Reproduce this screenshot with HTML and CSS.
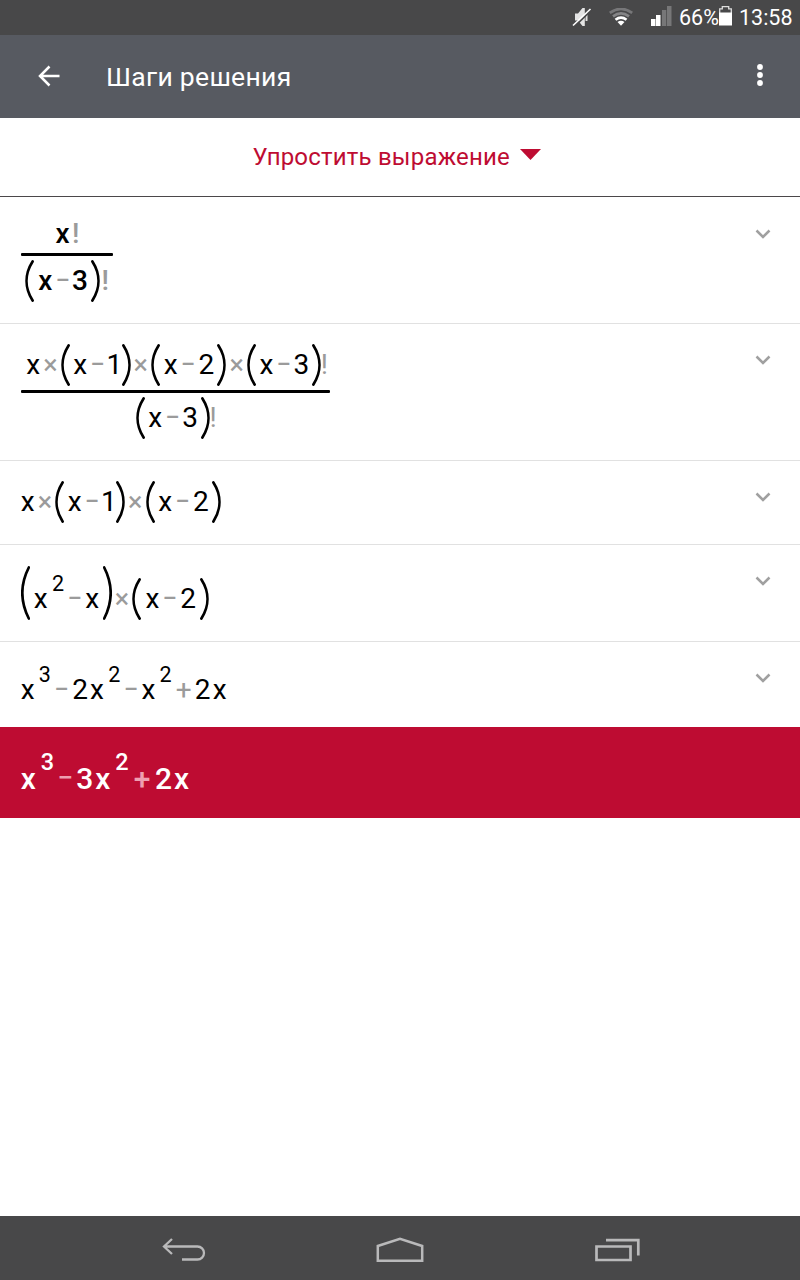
FILE: index.html
```html
<!DOCTYPE html>
<html lang="ru">
<head>
<meta charset="utf-8">
<title>Шаги решения</title>
<link rel="stylesheet" href="styles.css">
</head>
<body>
<svg class="defs" aria-hidden="true">
  <symbol id="open" viewBox="0 0 9 42"><path d="M7.6 1.5C-.4 14-.4 28 7.6 40.5"/></symbol>
  <symbol id="close" viewBox="0 0 9 42"><path d="M1.4 1.5C9.4 14 9.4 28 1.4 40.5"/></symbol>
  <symbol id="open-tall" viewBox="0 0 9 54"><path d="M7.8 1.5C-.6 18-.6 36 7.8 52.5"/></symbol>
  <symbol id="close-tall" viewBox="0 0 9 54"><path d="M1.2 1.5C9.6 18 9.6 36 1.2 52.5"/></symbol>
  <symbol id="chevron" viewBox="0 0 16 10"><path d="M1.5 1.5L8 8l6.500-6.500"/></symbol>
</svg>
<div class="screen">
  <div class="status">
    <svg class="mute" width="20" height="20" viewBox="0 0 20 20"><path d="M3 6.500h3L10.500 1h2.300v18h-2.300L6 13.500H3z" fill="#e4e4e4"/><path d="M14.500 6v8" stroke="#ddd" stroke-width="2"/><path d="M2.500 19.500L19.500 3" stroke="#484849" stroke-width="1.800"/><path d="M1 18.500L18.500 2" stroke="#fff" stroke-width="1.600"/></svg>
    <svg class="wifi" width="24" height="18" viewBox="0 0 24 18"><g fill="none" stroke-width="2.700"><path d="M.8 4.800Q12-3 23.200 4.800" stroke="#777779"/><path d="M4 8.400Q12 2.500 20 8.400" stroke="#858587"/><path d="M6.500 11.700Q12 7.500 17.500 11.700" stroke="#fff"/></g><path d="M8.500 14Q12 11.500 15.500 14L12 17.800z" fill="#fff"/></svg>
    <svg class="signal" width="21" height="21" viewBox="0 0 21 21"><path d="M0 13h4.500v7H0zM5 9h4.500v11H5z" fill="#fff"/><path d="M11 4h4.300v16H11zM16 0h4.500v20H16z" fill="#777778"/></svg>
    <span class="percent">66%</span>
    <svg class="battery" width="13" height="20" viewBox="0 0 13 20"><path d="M.7 7V2.800h2.600V.7h6.400v2.100h2.600V7" fill="none" stroke="#ddd" stroke-width="1.300"/><path d="M0 6.500h13V19.500H0z" fill="#fff"/></svg>
    <span class="clock">13:58</span>
  </div>
  <header class="appbar">
    <svg class="back" width="22" height="22" viewBox="0 0 22 22"><path d="M11.500 1.500L2 11l9.500 9.500M2 11h19.500" fill="none" stroke="#fff" stroke-width="2.500"/></svg>
    <h1 class="title">Шаги решения</h1>
    <svg class="more" width="6" height="24" viewBox="0 0 6 24"><g fill="#fff"><circle cx="3" cy="4" r="2.900"/><circle cx="3" cy="12" r="2.900"/><circle cx="3" cy="20" r="2.900"/></g></svg>
  </header>
  <div class="method">
    <span class="method-name">Упростить выражение</span>
    <svg width="21" height="11" viewBox="0 0 21 11"><path d="M0 0h21L10.500 11z" fill="#be0c32"/></svg>
  </div>
  <main class="steps">
    <section class="step step-first">
      <div class="fraction">
        <div class="expr numerator"><span class="var">x</span><span class="fact">!</span></div>
        <div class="expr denominator"><svg class="paren open"><use href="#open"/></svg><span class="var">x</span><span class="minus">−</span><span class="num three">3</span><svg class="paren close"><use href="#close"/></svg><span class="fact">!</span></div>
      </div>
      <svg class="chevron"><use href="#chevron"/></svg>
    </section>
    <section class="step step-expanded">
      <div class="fraction">
        <div class="expr numerator"><span class="var">x</span><span class="times">×</span><svg class="paren open"><use href="#open"/></svg><span class="var">x</span><span class="minus">−</span><span class="num one">1</span><svg class="paren close"><use href="#close"/></svg><span class="times">×</span><svg class="paren open"><use href="#open"/></svg><span class="var">x</span><span class="minus">−</span><span class="num two">2</span><svg class="paren close"><use href="#close"/></svg><span class="times">×</span><svg class="paren open"><use href="#open"/></svg><span class="var">x</span><span class="minus">−</span><span class="num three">3</span><svg class="paren close"><use href="#close"/></svg><span class="fact">!</span></div>
        <div class="expr denominator"><svg class="paren open"><use href="#open"/></svg><span class="var">x</span><span class="minus">−</span><span class="num three">3</span><svg class="paren close"><use href="#close"/></svg><span class="fact">!</span></div>
      </div>
      <svg class="chevron"><use href="#chevron"/></svg>
    </section>
    <section class="step step-reduced">
      <div class="expr"><span class="var">x</span><span class="times">×</span><svg class="paren open"><use href="#open"/></svg><span class="var">x</span><span class="minus">−</span><span class="num one">1</span><svg class="paren close"><use href="#close"/></svg><span class="times">×</span><svg class="paren open"><use href="#open"/></svg><span class="var">x</span><span class="minus">−</span><span class="num two">2</span><svg class="paren close"><use href="#close"/></svg></div>
      <svg class="chevron"><use href="#chevron"/></svg>
    </section>
    <section class="step step-product">
      <div class="expr"><svg class="paren tall open"><use href="#open-tall"/></svg><span class="var">x</span><span class="sup">2</span><span class="minus">−</span><span class="var">x</span><svg class="paren tall close"><use href="#close-tall"/></svg><span class="times">×</span><svg class="paren open"><use href="#open"/></svg><span class="var">x</span><span class="minus">−</span><span class="num two">2</span><svg class="paren close"><use href="#close"/></svg></div>
      <svg class="chevron"><use href="#chevron"/></svg>
    </section>
    <section class="step step-sum">
      <div class="expr"><span class="var">x</span><span class="sup">3</span><span class="minus">−</span><span class="num">2</span><span class="var">x</span><span class="sup">2</span><span class="minus">−</span><span class="var">x</span><span class="sup">2</span><span class="plus">+</span><span class="num">2</span><span class="var">x</span></div>
      <svg class="chevron"><use href="#chevron"/></svg>
    </section>
    <section class="step result">
      <div class="expr"><span class="var">x</span><span class="sup">3</span><span class="minus">−</span><span class="num">3</span><span class="var">x</span><span class="sup">2</span><span class="plus">+</span><span class="num">2</span><span class="var">x</span></div>
    </section>
  </main>
  <nav class="navbar">
    <svg width="44" height="24" viewBox="0 0 44 24"><path d="M10 1L2 8.500l8 7.500M2 8.500h33.500a6.500 6.500 0 0 1 0 13H20" fill="none" stroke="#b9b9ba" stroke-width="2.300"/></svg>
    <svg class="home" width="48" height="26" viewBox="0 0 48 26"><path d="M1.800 23.800V9L24 1.700 46.200 9v14.800z" fill="none" stroke="#b9b9ba" stroke-width="2.500"/></svg>
    <svg width="45" height="24" viewBox="0 0 45 24"><path d="M1.500 8.500h34v13.500h-34zM11 2.200h32.300v15.300" fill="none" stroke="#b9b9ba" stroke-width="2.700"/></svg>
  </nav>
</div>
</body>
</html>
```
FILE: styles.css
```css
* { box-sizing: border-box; }
body { margin: 0; background: #fff; font-family: Roboto, "Noto Sans", sans-serif; }
.defs { display: block; width: 0; height: 0; position: absolute; }
.screen { width: 800px; height: 1280px; display: flex; flex-direction: column; overflow: hidden; }

.status { height: 35px; background: #484849; color: #fff; display: flex; align-items: flex-start; padding: 6px 9px 0 0; justify-content: flex-end; font-size: 21.500px; line-height: 24px; white-space: nowrap; }
.mute { margin: 1px 17px 0 0; }
.wifi { margin: 2px 18px 0 0; }
.signal { margin-right: 7px; }
.percent { width: 40px; }
.battery { margin-right: 7px; }
.clock { width: 52px; }

.appbar { height: 83px; background: #575a61; display: flex; align-items: center; padding: 0 37px 2px 38px; }
.title { margin: 0 auto 0 46px; color: #fff; font-size: 26.500px; font-weight: 400; line-height: 32px; letter-spacing: .3px; padding-top: 3px; }
.more { margin-bottom: 2px; }

.method { height: 79px; border-bottom: 1px solid #4b484a; display: flex; align-items: center; justify-content: center; gap: 10.500px; color: #be0c32; padding: 0 6px 1px 0; }
.method svg { margin-bottom: 4px; }
.method-name { font-size: 24px; line-height: 30px; letter-spacing: .2px; padding-top: 1px; }

.steps { flex: 1; }
.step { display: flex; justify-content: space-between; align-items: flex-start; padding: 20px 29px 0 20.700px; border-bottom: 1px solid #e1e1e1; font-size: 28px; color: #000; }
.step-first { height: 127px; padding-top: 16px; font-weight: 500; }
.step-expanded { height: 137px; }
.step-reduced { height: 84px; }
.step-product { height: 97px; padding-top: 21px; }
.step-sum { height: 85px; padding-top: 27px; border-bottom: 0; }
.result { height: 91px; padding-top: 29px; border-bottom: 0; background: #be0c32; color: #fff; font-size: 30px; font-weight: 500; }

.fraction { display: flex; flex-direction: column; align-items: center; }
.fraction::before { content: ""; order: 1; align-self: stretch; height: 3px; background: #000; border-radius: 1px; }
.numerator { order: 0; }
.denominator { order: 2; padding-top: 4px; }
.step-first .fraction { width: 92px; }
.step-first .numerator { margin-bottom: -2px; padding-left: 1px; }
.step-expanded .fraction { width: 309px; margin-left: .8px; }
.step-expanded .numerator { margin-bottom: 4px; padding-left: 1.500px; }

.expr { display: flex; align-items: flex-end; line-height: 42px; }
.expr > span { display: flex; justify-content: center; white-space: nowrap; }
.paren { display: block; width: 9px; height: 42px; fill: none; stroke: currentColor; stroke-width: 2.700px; stroke-linecap: round; }
.paren.tall { height: 54px; }
.open { margin-right: 3.400px; }
.close { margin-left: 3px; }
.step-first .open { margin-right: 4.200px; }
.step-product .open { margin-right: 4.100px; }
.step-product .close { margin-left: 3.500px; }
.var { width: 14px; }
.num { width: 16px; margin-right: 2px; }
.num.one { width: 12px; margin: 0 -1.800px 0 .3px; }
.num.two { margin-right: 0; }
.num.three { margin: 0 -.5px 0 -1px; }
.times, .minus, .plus, .fact { color: #9b9b9b; }
.times { width: 12px; margin: 0 4.500px 0 4.200px; font-size: 27px; }
.expr > .minus { width: 12px; margin: 0 4.400px; font-size: 26px; font-weight: 500; line-height: 40px; padding-bottom: 2px; }
.plus { width: 14px; margin: 0 4px 0 5px; }
.fact { width: 6px; margin-left: .5px; }
.numerator .var + .fact { margin-left: 3.200px; }
.step-first .denominator .fact { margin-left: 2.700px; }
.sup { width: 12px; margin: 0 0 30px 4.200px; font-size: 21.500px; line-height: 12px; }
.result .var { width: 15px; }
.result .sup { width: 13px; margin: 0 0 32px 5.300px; font-size: 23.500px; }
.result .num { width: 17px; }
.result .minus, .result .plus { color: #ee9fb0; }
.expr > .sup + .minus { margin-left: 4.800px; }
.result .expr > .minus { width: 13px; font-size: 28px; }
.result .plus { width: 15px; margin: 0 5.500px 0 6px; }

.chevron { width: 16px; height: 10px; fill: none; stroke: #a0a0a0; stroke-width: 2.500px; margin-top: 9.500px; }
.step-first .chevron { margin-top: 15.500px; }
.step-expanded .chevron, .step-reduced .chevron { margin-top: 10.500px; }
.step-sum .chevron { margin-top: 3.500px; }

.navbar { height: 64px; background: #484849; display: flex; justify-content: space-between; align-items: center; padding: 3px 160px 0 162px; }
.home { margin: 0 1px 0 -1px; }
```
